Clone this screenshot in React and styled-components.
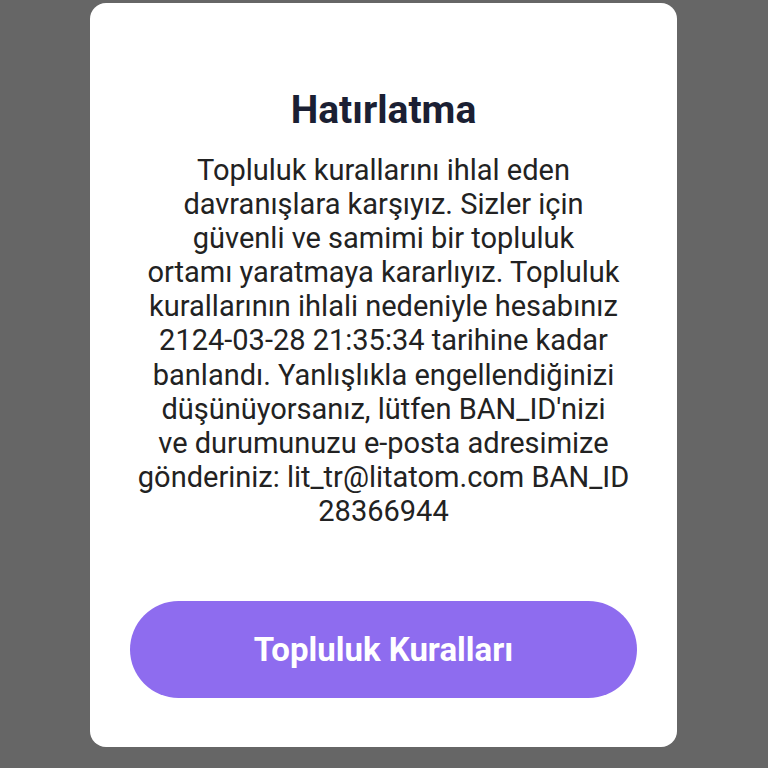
import React from "react"
import styled, { createGlobalStyle } from "styled-components"

const GlobalStyle = createGlobalStyle`
  html, body {
    margin: 0;
    padding: 0;
    background: #666666;
    font-family: Roboto, "Noto Sans", sans-serif;
  }
`

const Screen = styled.div`
  width: 768px;
  height: 768px;
  display: flex;
  justify-content: center;
  align-items: flex-start;
  padding-top: 3px;
  box-sizing: border-box;
`

const Card = styled.div`
  width: 587px;
  height: 744px;
  margin-left: -1px;
  background: #ffffff;
  border-radius: 16px;
  box-sizing: border-box;
  padding: 84px 30px 49px;
  display: flex;
  flex-direction: column;
  align-items: center;
`

const Title = styled.h1`
  margin: 0;
  font-size: 39px;
  line-height: 46px;
  font-weight: 700;
  color: #1b1f33;
  text-align: center;
`

const Message = styled.p`
  margin: 20px 0 0;
  font-size: 29px;
  line-height: 34.1px;
  color: #222222;
  text-align: center;
  white-space: nowrap;
`

const Spacer = styled.div`
  flex: 1;
`

const PrimaryButton = styled.button`
  width: 507px;
  height: 97px;
  border: none;
  border-radius: 49px;
  background: #8e6cef;
  color: #ffffff;
  font-family: Roboto, "Noto Sans", sans-serif;
  font-size: 33px;
  font-weight: 700;
  cursor: pointer;
`

const lines = [
  "Topluluk kurallarını ihlal eden",
  "davranışlara karşıyız. Sizler için",
  "güvenli ve samimi bir topluluk",
  "ortamı yaratmaya kararlıyız. Topluluk",
  "kurallarının ihlali nedeniyle hesabınız",
  "2124-03-28 21:35:34 tarihine kadar",
  "banlandı. Yanlışlıkla engellendiğinizi",
  "düşünüyorsanız, lütfen BAN_ID'nizi",
  "ve durumunuzu e-posta adresimize",
  "gönderiniz: lit_tr@litatom.com BAN_ID",
  "28366944",
]

const App = () => {
  return (
    <>
      <GlobalStyle />
      <Screen>
        <Card>
          <Title>Hatırlatma</Title>
          <Message>
            {lines.map((line, i) => (
              <React.Fragment key={i}>
                {line}
                {i < lines.length - 1 && <br />}
              </React.Fragment>
            ))}
          </Message>
          <Spacer />
          <PrimaryButton>Topluluk Kuralları</PrimaryButton>
        </Card>
      </Screen>
    </>
  )
}

export default App
